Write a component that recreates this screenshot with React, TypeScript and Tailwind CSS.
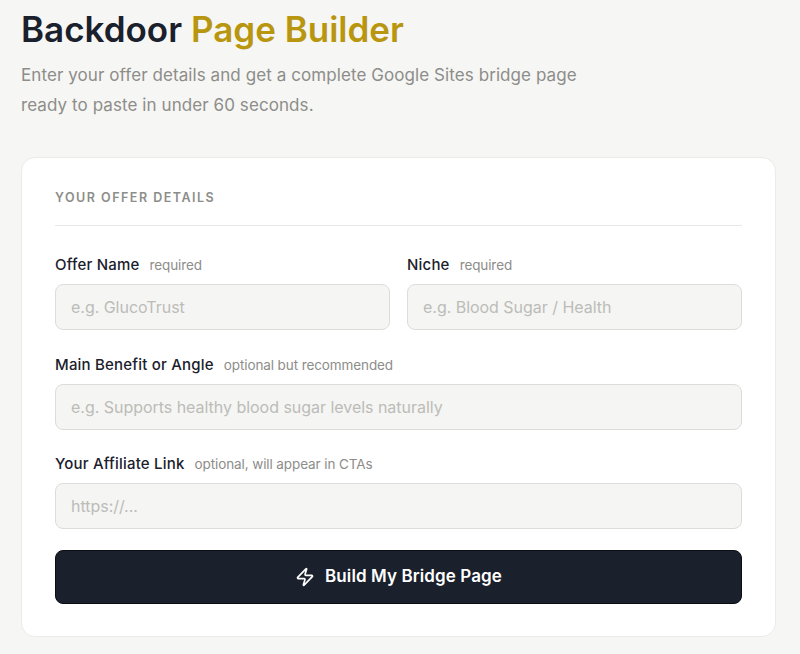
import { Zap } from "lucide-react";

const font = { fontFamily: "Inter, sans-serif" };

function Field({
  label,
  hint,
  placeholder,
}: {
  label: string;
  hint: string;
  placeholder: string;
}) {
  return (
    <div className="flex-1 min-w-0">
      <div className="flex items-baseline gap-[10px] h-[20px]">
        <label className="text-[15px] font-medium tracking-[0.2px] text-[#1a202c]">{label}</label>
        <span className="text-[13.5px] text-[#8d8d8a] tracking-[-0.1px]">{hint}</span>
      </div>
      <input
        readOnly
        placeholder={placeholder}
        className="mt-[10px] block h-[46px] w-full rounded-[8px] border border-[#dcdcd8] bg-[#f5f5f3] px-[15px] text-[16px] tracking-[-0.03px] placeholder:text-[#bcbcb8] outline-none"
      />
    </div>
  );
}

export default function App() {
  return (
    <div
      className="h-[654px] w-[800px] overflow-hidden bg-[#f6f6f4] pl-[21px] pr-[24px]"
      style={font}
    >
      <h1 className="pt-[8px] text-[35px] leading-[42px] font-semibold text-[#1a202c]">
        Backdoor <span className="text-[#b8960f]">Page Builder</span>
      </h1>
      <p className="mt-[10px] text-[17px] leading-[30px] tracking-[0.08px] text-[#8d8d8a]">
        Enter your offer details and get a complete Google Sites bridge page
        <br />
        ready to paste in under 60 seconds.
      </p>

      <div className="mt-[37px] h-[480px] rounded-[14px] border border-[#ebebe7] bg-white px-[33px] pt-[32px]">
        <div className="border-b border-[#e8e8e4] pb-[19px] text-[12.5px] leading-[16px] font-semibold tracking-[1.5px] text-[#8d8d8a]">
          YOUR OFFER DETAILS
        </div>

        <div className="mt-[28px] flex gap-[17px]">
          <Field label="Offer Name" hint="required" placeholder="e.g. GlucoTrust" />
          <Field label="Niche" hint="required" placeholder="e.g. Blood Sugar / Health" />
        </div>
        <div className="mt-[24px] flex">
          <Field
            label="Main Benefit or Angle"
            hint="optional but recommended"
            placeholder="e.g. Supports healthy blood sugar levels naturally"
          />
        </div>
        <div className="mt-[23px] flex">
          <Field
            label="Your Affiliate Link"
            hint="optional, will appear in CTAs"
            placeholder="https://..."
          />
        </div>

        <button className="mt-[21px] flex h-[54px] w-full items-center justify-center gap-[10px] rounded-[8px] border border-[#0a0d12] bg-[#1a202c] text-[17px] font-semibold tracking-[0.1px] text-white">
          <Zap size={20} strokeWidth={2} />
          Build My Bridge Page
        </button>
      </div>
    </div>
  );
}
